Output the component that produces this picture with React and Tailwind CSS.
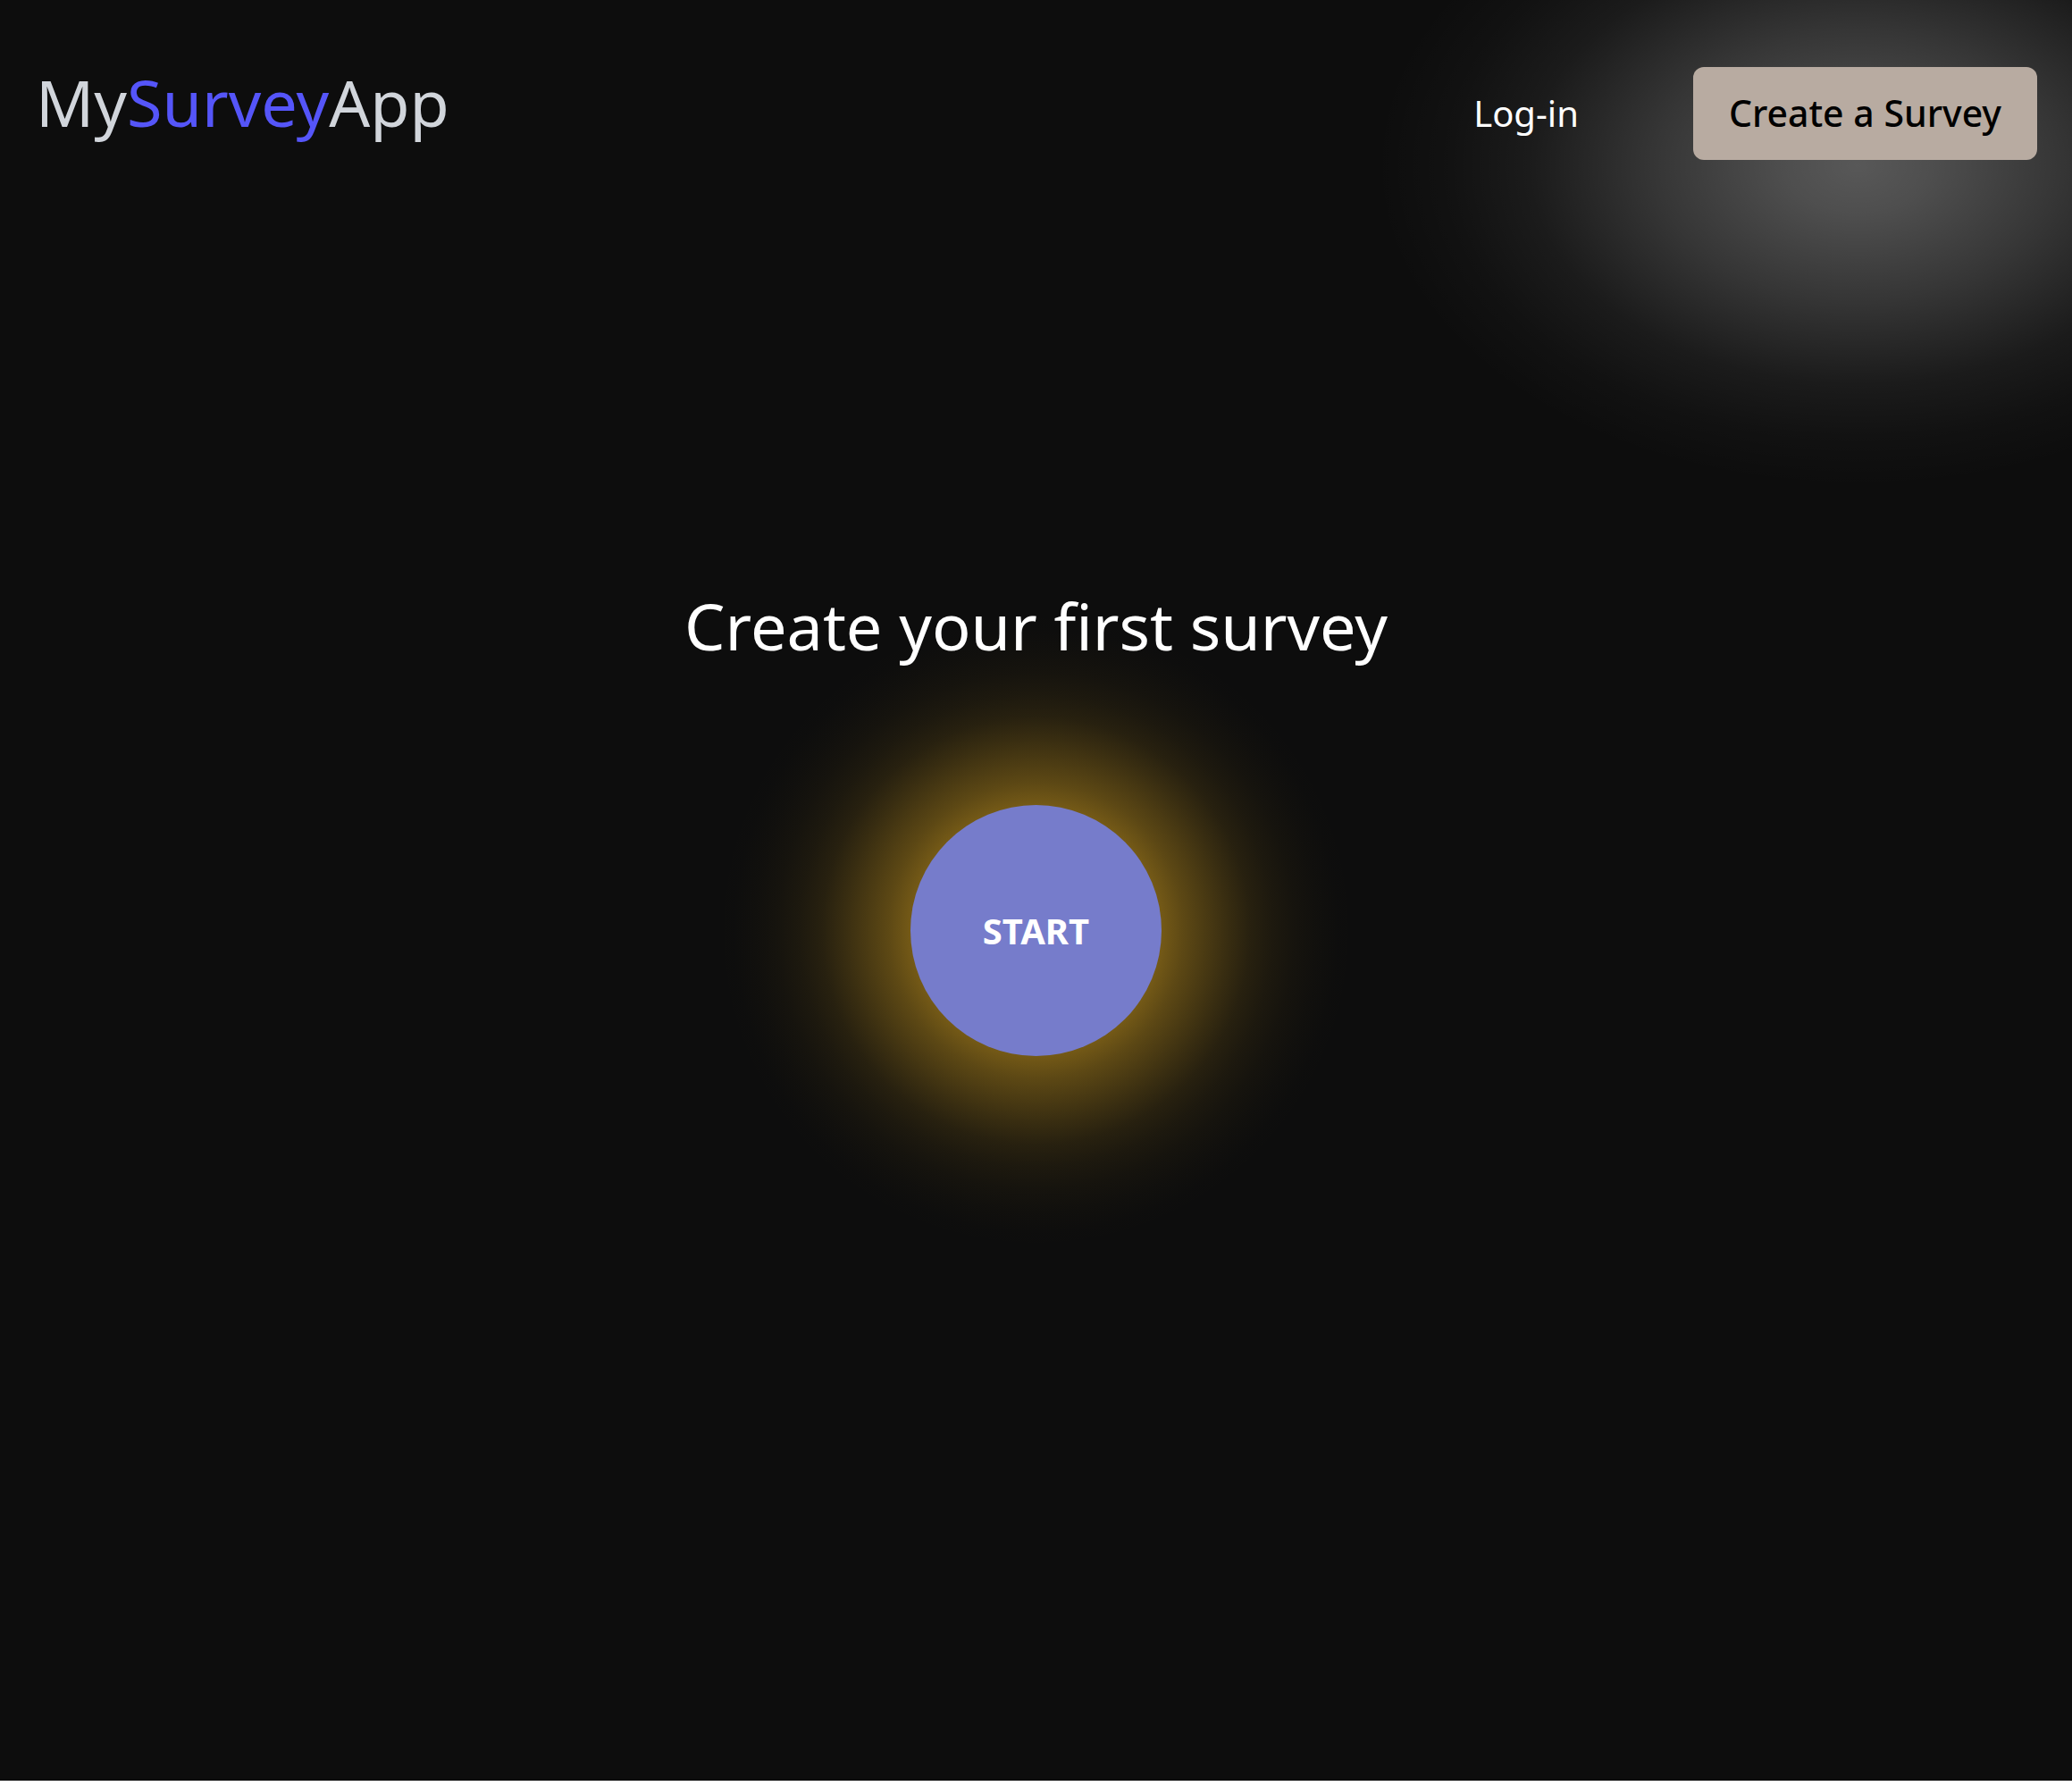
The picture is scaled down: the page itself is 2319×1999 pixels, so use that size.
export default function App() {
  return (
    <div className="relative isolate min-h-[1993px] overflow-hidden bg-[#0d0d0d] font-['Noto_Sans',_'Open_Sans',_sans-serif]">
      <header className="flex items-start justify-between pl-[40px] pr-[39px] pt-[75px]">
        <div className="mt-[3px] text-[72px] leading-none text-[#d1d5db]">
          My<span className="text-[#5555f9]">Survey</span>App
        </div>
        <nav className="flex items-center gap-[128px]">
          <a className="text-[40px] leading-none text-white">Log-in</a>
          <button className="relative rounded-[12px] bg-[#b8aba1] px-[40px] pb-[32px] pt-[31px] text-[41px] font-medium leading-none text-black">
            <span className="pointer-events-none absolute left-[-356px] top-[-250px] -z-10 h-[720px] w-[1080px] bg-[radial-gradient(ellipse_closest-side,rgba(255,255,255,0.31)_0%,rgba(255,255,255,0.27)_15%,rgba(255,255,255,0.17)_42%,rgba(255,255,255,0.06)_68%,rgba(255,255,255,0.02)_85%,rgba(255,255,255,0)_100%)]" />
            Create a Survey
          </button>
        </nav>
      </header>
      <main className="flex flex-col items-center pt-[485px]">
        <h1 className="text-[72px] font-normal leading-none text-white">Create your first survey</h1>
        <button className="relative mt-[165px] flex h-[281px] w-[281px] items-center justify-center rounded-full bg-[#767ccb] text-[40px] font-bold leading-none text-white">
          <span className="pointer-events-none absolute -inset-[220px] -z-10 bg-[radial-gradient(circle_closest-side,rgba(218,165,32,0.5)_0%,rgba(218,165,32,0.5)_39%,rgba(218,165,32,0.39)_46%,rgba(218,165,32,0.3)_52.6%,rgba(218,165,32,0.21)_59.6%,rgba(218,165,32,0.13)_66.5%,rgba(218,165,32,0.08)_73.5%,rgba(218,165,32,0.045)_80.4%,rgba(218,165,32,0.02)_87.4%,rgba(218,165,32,0.005)_94%,rgba(218,165,32,0)_100%)]" />
          START
        </button>
      </main>
    </div>
  );
}
